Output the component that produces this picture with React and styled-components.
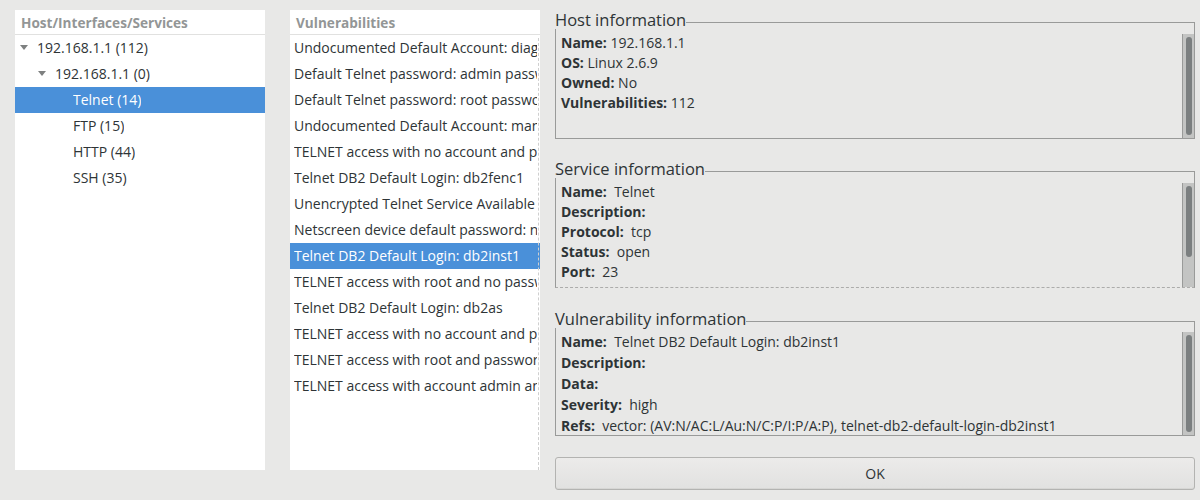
import React from 'react';
import styled, { createGlobalStyle } from 'styled-components';

const GlobalStyle = createGlobalStyle`
  html, body { margin: 0; padding: 0; background: #e8e8e7; }
  body { font-family: "Open Sans", "Noto Sans", sans-serif; }
`;

const Window = styled.div`
  width: 1200px;
  height: 500px;
  box-sizing: border-box;
  padding: 10px 5px 0 15px;
  display: flex;
  align-items: flex-start;
  background: #e8e8e7;
  color: #2e3436;
  font-family: "Open Sans", "Noto Sans", sans-serif;
  font-size: 14px;
`;

const Pane = styled.div`
  width: 250px;
  height: 460px;
  margin-right: ${(p) => p.$spaceAfter}px;
  background: #ffffff;
  display: flex;
  flex-direction: column;
  flex-shrink: 0;
`;

const PaneHeader = styled.div`
  height: 24px;
  border-bottom: 1px solid #e1e1e0;
  padding-left: 6px;
  display: flex;
  align-items: center;
  color: #939696;
  font-size: 13.6px;
  font-weight: 700;
  flex-shrink: 0;
`;

const ListBody = styled.div`
  position: relative;
  flex: 1;
  overflow: hidden;
  &::after {
    content: "";
    display: ${(p) => (p.$separator ? 'block' : 'none')};
    position: absolute;
    top: 3px;
    bottom: 0;
    left: 248px;
    border-left: 1px dashed #cfcfcf;
  }
`;

const Row = styled.div`
  height: 26px;
  box-sizing: border-box;
  padding-bottom: 2px;
  display: flex;
  align-items: center;
  padding-left: ${(p) => p.$indent}px;
  background: ${(p) => (p.$selected ? '#4a90d9' : 'transparent')};
  color: ${(p) => (p.$selected ? '#ffffff' : '#2e3436')};
  white-space: nowrap;
  overflow: hidden;
`;

const RowText = styled.span`
  display: block;
  overflow: hidden;
  max-width: ${(p) => p.$max || 1000}px;
`;

const ExpanderSlot = styled.span`
  width: 16px;
  height: 24px;
  display: flex;
  align-items: center;
  flex-shrink: 0;
`;

const Triangle = styled.span`
  width: 0;
  height: 0;
  border-left: 4px solid transparent;
  border-right: 4px solid transparent;
  border-top: 5px solid #7e8080;
  margin-left: -1px;
  margin-top: 1px;
`;

const RightColumn = styled.div`
  width: 640px;
  flex-shrink: 0;
  display: flex;
  flex-direction: column;
  padding-top: 1px;
`;

const Frame = styled.div`
  display: flex;
  flex-direction: column;
  margin-bottom: ${(p) => p.$spaceAfter}px;
`;

const FrameHead = styled.div`
  height: 18px;
  display: flex;
  align-items: flex-start;
`;

const Legend = styled.span`
  font-size: 16.5px;
  line-height: 18px;
  color: #2e3436;
  white-space: nowrap;
`;

const HeadLine = styled.span`
  flex: 1;
  margin-top: 11px;
  height: 7px;
  border-top: 1px solid #999a99;
  border-right: 1px solid #999a99;
`;

const FrameBody = styled.div`
  height: ${(p) => p.$height}px;
  box-sizing: border-box;
  border: 1px solid #999a99;
  border-top: none;
  border-bottom: 1px ${(p) => (p.$dashed ? 'dashed #acacab' : 'solid #999a99')};
  display: flex;
  overflow: hidden;
`;

const Content = styled.div`
  flex: 1;
  padding: ${(p) => p.$padTop}px 0 0 5px;
  line-height: ${(p) => p.$lineHeight}px;
  white-space: pre;
  overflow: hidden;
`;

const Field = styled.div`
  height: ${(p) => p.$lineHeight}px;
`;

const Label = styled.b`
  font-weight: 700;
`;

const Trough = styled.div`
  width: 12px;
  margin-top: ${(p) => p.$top}px;
  border-left: 1px solid #999a99;
  background: #c3c4c3;
  padding: 3px 3px 0 3px;
  box-sizing: border-box;
  flex-shrink: 0;
`;

const Thumb = styled.div`
  width: 6px;
  height: ${(p) => p.$height}px;
  border-radius: 3px;
  background: #7b7f80;
`;

const OkButton = styled.button`
  height: 33px;
  border: 1px solid #b3b3b1;
  border-radius: 3px;
  background: linear-gradient(#ecebea, #e1e1e0);
  box-shadow: inset 0 -1px 0 #d6d6d4;
  color: #2e3436;
  font-family: "Open Sans", "Noto Sans", sans-serif;
  font-size: 14px;
  padding: 0;
`;

const tree = [
  { text: '192.168.1.1 (112)', depth: 0, expander: true },
  { text: '192.168.1.1 (0)', depth: 1, expander: true },
  { text: 'Telnet (14)', depth: 2, selected: true },
  { text: 'FTP (15)', depth: 2 },
  { text: 'HTTP (44)', depth: 2 },
  { text: 'SSH (35)', depth: 2 },
];

const vulns = [
  'Undocumented Default Account:  diag',
  'Default Telnet password: admin password',
  'Default Telnet password: root password',
  'Undocumented Default Account:  manuf',
  'TELNET access with no account and password',
  'Telnet DB2 Default Login: db2fenc1',
  'Unencrypted Telnet Service Available',
  'Netscreen device default password: netscreen',
  'Telnet DB2 Default Login: db2inst1',
  'TELNET access with root and no password',
  'Telnet DB2 Default Login: db2as',
  'TELNET access with no account and password',
  'TELNET access with root and password',
  'TELNET access with account admin and password',
];

const InfoFrame = ({ title, height, dashed, padTop, lineHeight, troughTop, thumb, fields, spaceAfter }) => (
  <Frame $spaceAfter={spaceAfter}>
    <FrameHead>
      <Legend>{title}</Legend>
      <HeadLine />
    </FrameHead>
    <FrameBody $height={height} $dashed={dashed}>
      <Content $padTop={padTop} $lineHeight={lineHeight}>
        {fields.map(([k, v]) => (
          <Field key={k} $lineHeight={lineHeight}>
            <Label>{k}</Label>
            {v}
          </Field>
        ))}
      </Content>
      <Trough $top={troughTop}>
        <Thumb $height={thumb} />
      </Trough>
    </FrameBody>
  </Frame>
);

export default function App() {
  return (
    <>
      <GlobalStyle />
      <Window>
        <Pane $spaceAfter={25}>
          <PaneHeader>Host/Interfaces/Services</PaneHeader>
          <ListBody>
            {tree.map((n, i) => (
              <Row key={i} $indent={6 + n.depth * 18} $selected={n.selected}>
                <ExpanderSlot>{n.expander && <Triangle />}</ExpanderSlot>
                <RowText>{n.text}</RowText>
              </Row>
            ))}
          </ListBody>
        </Pane>
        <Pane $spaceAfter={15}>
          <PaneHeader>Vulnerabilities</PaneHeader>
          <ListBody $separator>
            {vulns.map((v, i) => (
              <Row key={i} $indent={4} $selected={i === 8}>
                <RowText $max={243}>{v}</RowText>
              </Row>
            ))}
          </ListBody>
        </Pane>
        <RightColumn>
          <InfoFrame
            title="Host information"
            height={110}
            padTop={4}
            lineHeight={20}
            troughTop={5}
            thumb={98}
            spaceAfter={21}
            fields={[
              ['Name:', ' 192.168.1.1'],
              ['OS:', ' Linux 2.6.9'],
              ['Owned:', ' No'],
              ['Vulnerabilities:', ' 112'],
            ]}
          />
          <InfoFrame
            title="Service information"
            height={110}
            dashed
            padTop={4}
            lineHeight={20}
            troughTop={5}
            thumb={71}
            spaceAfter={22}
            fields={[
              ['Name:', '  Telnet'],
              ['Description:', ''],
              ['Protocol:', '  tcp'],
              ['Status:', '  open'],
              ['Port:', '  23'],
            ]}
          />
          <InfoFrame
            title="Vulnerability information"
            height={108}
            padTop={3}
            lineHeight={21}
            troughTop={4}
            thumb={97}
            spaceAfter={21}
            fields={[
              ['Name:', '  Telnet DB2 Default Login: db2inst1'],
              ['Description:', ''],
              ['Data:', ''],
              ['Severity:', '  high'],
              ['Refs:', '  vector: (AV:N/AC:L/Au:N/C:P/I:P/A:P), telnet-db2-default-login-db2inst1'],
            ]}
          />
          <OkButton>OK</OkButton>
        </RightColumn>
      </Window>
    </>
  );
}
